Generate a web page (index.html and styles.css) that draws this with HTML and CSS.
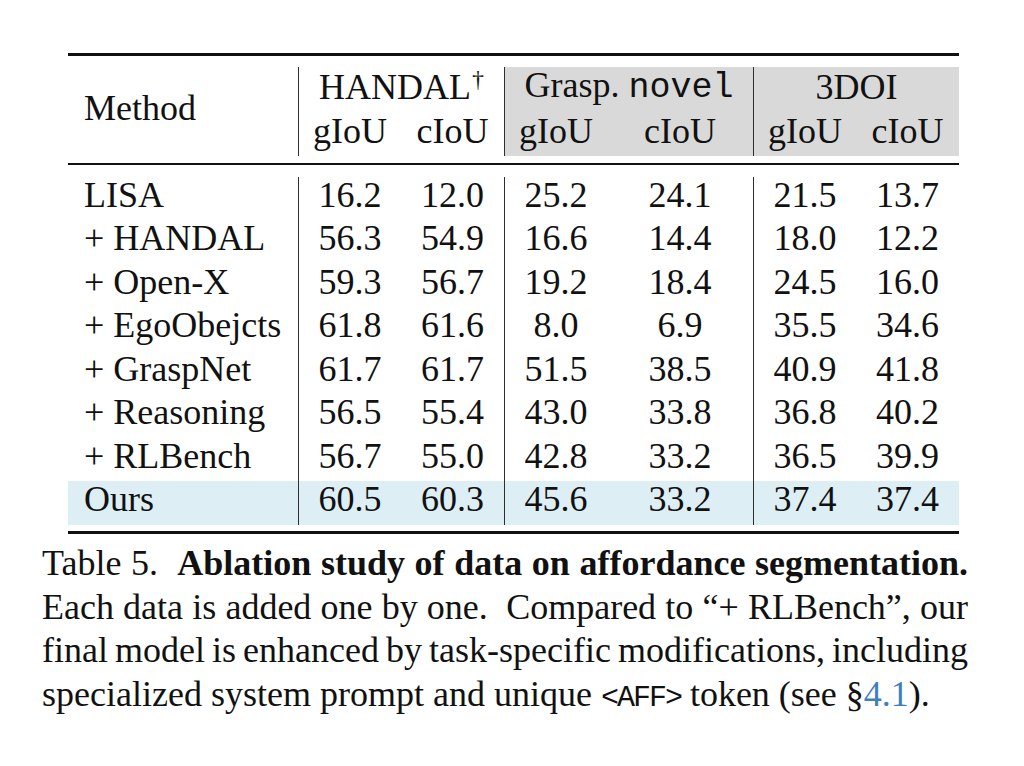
FILE: index.html
```html
<!DOCTYPE html>
<html lang="en">
<head>
<meta charset="utf-8">
<title>Table 5</title>
<link rel="stylesheet" href="styles.css">
</head>
<body>
<div class="figure">
  <table class="ablation">
    <colgroup>
      <col class="c-method">
      <col class="c-num"><col class="c-num">
      <col class="c-num"><col class="c-wide">
      <col class="c-num"><col class="c-num">
    </colgroup>
    <thead>
      <tr class="sp sp-top"><td colspan="7"></td></tr>
      <tr class="hrow">
        <th rowspan="2" class="method-h">Method</th>
        <th colspan="2" class="grp">HANDAL<sup class="dag">†</sup></th>
        <th colspan="2" class="grp shade">Grasp. <span class="tt">novel</span></th>
        <th colspan="2" class="grp shade">3DOI</th>
      </tr>
      <tr class="hrow">
        <th class="grp">gIoU</th><th>cIoU</th>
        <th class="grp shade">gIoU</th><th class="shade">cIoU</th>
        <th class="grp shade">gIoU</th><th class="shade">cIoU</th>
      </tr>
      <tr class="sp sp-a"><td colspan="7"></td></tr>
      <tr class="midrule"><td colspan="7"></td></tr>
      <tr class="sp sp-b"><td colspan="7"></td></tr>
    </thead>
    <tbody>
      <tr><td class="name">LISA</td><td class="grp">16.2</td><td>12.0</td><td class="grp">25.2</td><td>24.1</td><td class="grp">21.5</td><td>13.7</td></tr>
      <tr><td class="name">+ HANDAL</td><td class="grp">56.3</td><td>54.9</td><td class="grp">16.6</td><td>14.4</td><td class="grp">18.0</td><td>12.2</td></tr>
      <tr><td class="name">+ Open-X</td><td class="grp">59.3</td><td>56.7</td><td class="grp">19.2</td><td>18.4</td><td class="grp">24.5</td><td>16.0</td></tr>
      <tr><td class="name">+ EgoObejcts</td><td class="grp">61.8</td><td>61.6</td><td class="grp">8.0</td><td>6.9</td><td class="grp">35.5</td><td>34.6</td></tr>
      <tr><td class="name">+ GraspNet</td><td class="grp">61.7</td><td>61.7</td><td class="grp">51.5</td><td>38.5</td><td class="grp">40.9</td><td>41.8</td></tr>
      <tr><td class="name">+ Reasoning</td><td class="grp">56.5</td><td>55.4</td><td class="grp">43.0</td><td>33.8</td><td class="grp">36.8</td><td>40.2</td></tr>
      <tr><td class="name">+ RLBench</td><td class="grp">56.7</td><td>55.0</td><td class="grp">42.8</td><td>33.2</td><td class="grp">36.5</td><td>39.9</td></tr>
      <tr class="ours"><td class="name">Ours</td><td class="grp">60.5</td><td>60.3</td><td class="grp">45.6</td><td>33.2</td><td class="grp">37.4</td><td>37.4</td></tr>
    </tbody>
    <tfoot>
      <tr class="sp sp-c"><td colspan="7"></td></tr>
    </tfoot>
  </table>

  <div class="caption">
    <div class="ln">Table 5.&nbsp; <b>Ablation study of data on affordance segmentation.</b></div>
    <div class="ln">Each data is added one by one.&nbsp; Compared to “+ RLBench”, our</div>
    <div class="ln">final model is enhanced by task-specific modifications, including</div>
    <div class="ln last">specialized system prompt and unique <span class="tt-cap">&lt;AFF&gt;</span> token (see §<span class="ref">4.1</span>).</div>
  </div>
</div>
</body>
</html>
```

FILE: styles.css
```css
html, body {
  margin: 0;
  padding: 0;
  background: #ffffff;
}

body {
  font-family: "Liberation Serif", "Times New Roman", serif;
  color: #111111;
}

.figure {
  padding-top: 53px;
}

.ablation {
  border-collapse: separate;
  border-spacing: 0;
  table-layout: fixed;
  width: 891px;
  margin-left: 68px;
  border-top: 3px solid #111111;
  border-bottom: 3px solid #111111;
  font-size: 36px;
}

.c-method { width: 230px; }
.c-num { width: 103px; }
.c-wide { width: 146px; }

.ablation th,
.ablation td {
  padding: 0 0 7.5px 0;
  line-height: 36px;
  text-align: center;
  font-weight: normal;
  white-space: nowrap;
}

.ablation .hrow th {
  padding-bottom: 7px;
}

.ablation .method-h {
  text-align: left;
  padding-left: 16px;
  padding-bottom: 4px;
  vertical-align: middle;
}

.ablation td.name {
  text-align: left;
  padding-left: 16px;
}

.ablation .grp {
  border-left: 1px solid #2e2e2e;
}

.ablation .shade {
  background: #d9d9d9;
}

.ablation tr.ours td {
  background: #ddeef5;
}

.dag {
  font-size: 24px;
  line-height: 0;
  vertical-align: 12px;
  margin-left: 1px;
}

.tt {
  font-family: "Liberation Mono", "Courier New", monospace;
  font-size: 35px;
}

/* spacer rows */
.ablation .sp td {
  padding: 0;
  font-size: 0;
  line-height: 0;
}
.ablation .sp-top td { height: 11px; }
.ablation .sp-a td { height: 7px; }
.ablation .sp-b td { height: 11.5px; }
.ablation .sp-c td { height: 6.5px; }

.ablation .midrule td {
  padding: 0;
  height: 2px;
  font-size: 0;
  line-height: 0;
  background: #111111;
}

/* caption */
.caption {
  margin: 8.4px 0 0 42px;
  width: 926px;
  font-size: 36px;
  line-height: 43.5px;
}

.caption .ln {
  text-align: justify;
  text-align-last: justify;
  word-spacing: -5px;
}

.caption .ln.last {
  text-align: left;
  text-align-last: left;
  word-spacing: 0;
}

.caption b {
  font-weight: bold;
}

.tt-cap {
  font-family: "Liberation Mono", "Courier New", monospace;
  font-size: 30px;
  letter-spacing: -2px;
}

.ref {
  color: #3f7fc0;
}
```
